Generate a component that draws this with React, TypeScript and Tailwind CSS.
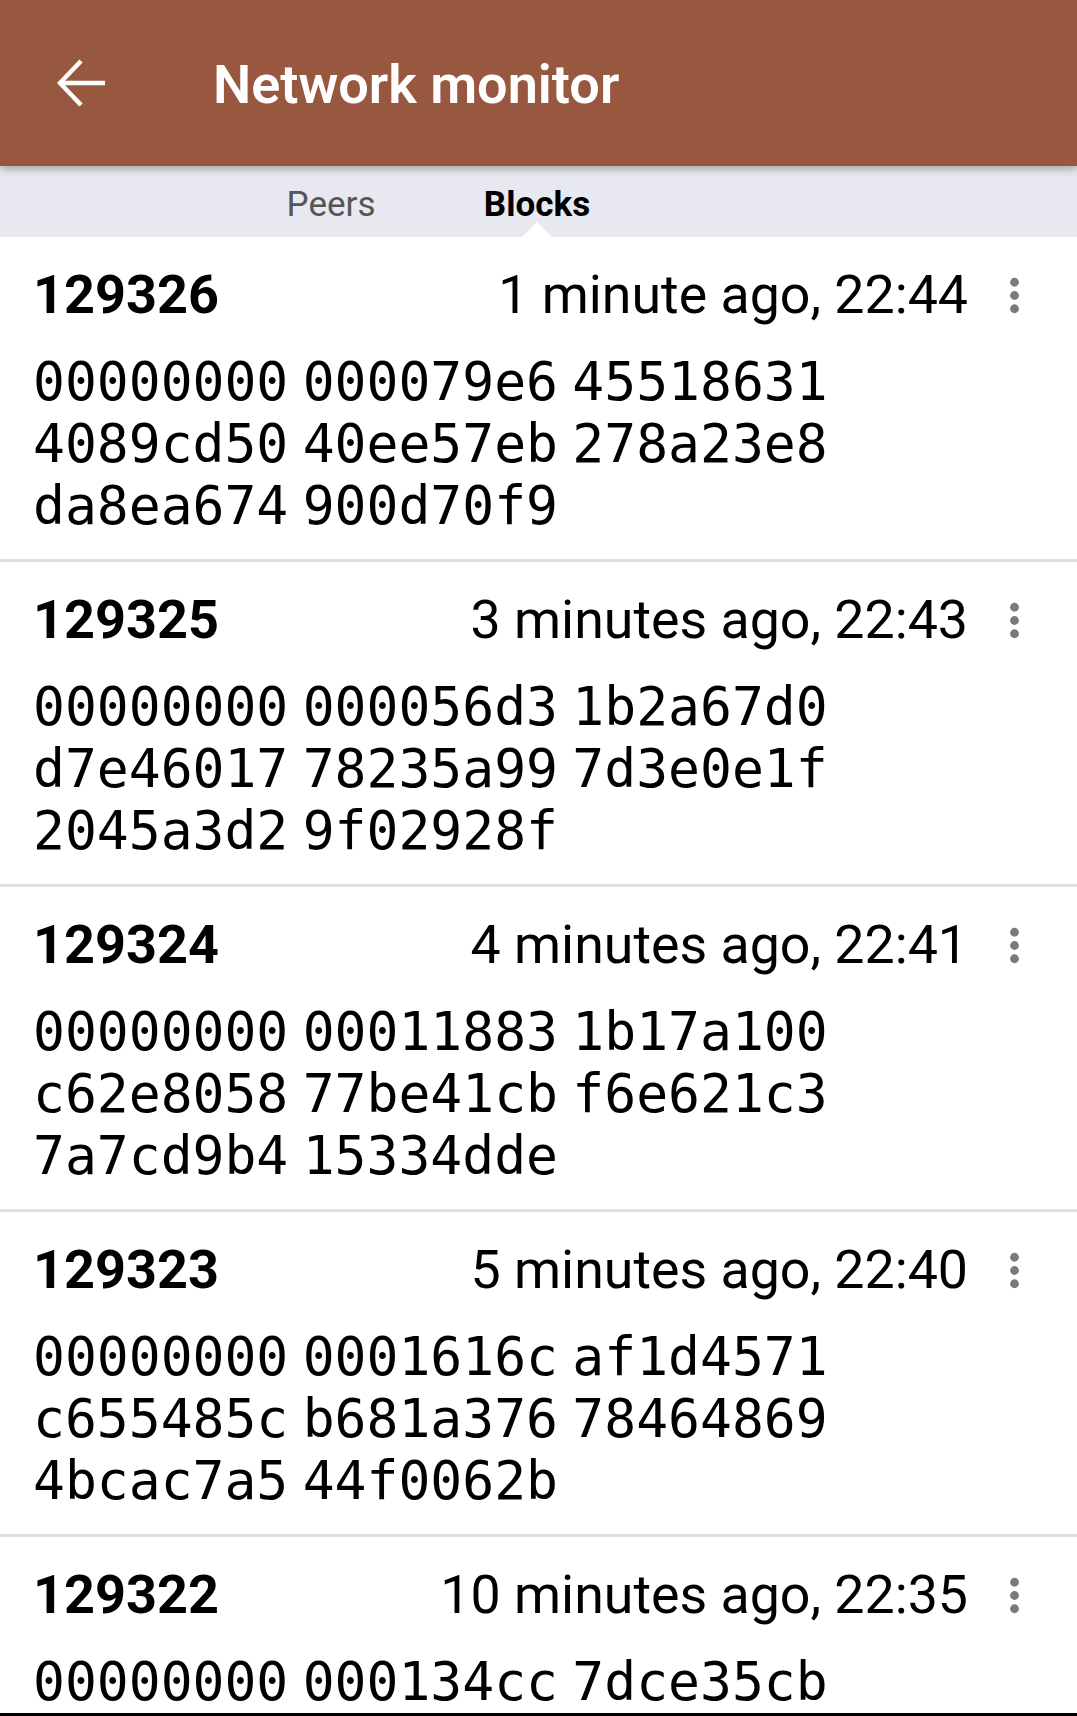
import React from "react";

type Block = {
  height: string;
  time: string;
  hash: string[];
};

const blocks: Block[] = [
  {
    height: "129326",
    time: "1 minute ago, 22:44",
    hash: ["00000000 000079e6 45518631", "4089cd50 40ee57eb 278a23e8", "da8ea674 900d70f9"],
  },
  {
    height: "129325",
    time: "3 minutes ago, 22:43",
    hash: ["00000000 000056d3 1b2a67d0", "d7e46017 78235a99 7d3e0e1f", "2045a3d2 9f02928f"],
  },
  {
    height: "129324",
    time: "4 minutes ago, 22:41",
    hash: ["00000000 00011883 1b17a100", "c62e8058 77be41cb f6e621c3", "7a7cd9b4 15334dde"],
  },
  {
    height: "129323",
    time: "5 minutes ago, 22:40",
    hash: ["00000000 0001616c af1d4571", "c655485c b681a376 78464869", "4bcac7a5 44f0062b"],
  },
  {
    height: "129322",
    time: "10 minutes ago, 22:35",
    hash: ["00000000 000134cc 7dce35cb"],
  },
];

const MoreIcon = () => (
  <svg viewBox="0 0 24 24" className="w-[53px] h-[53px]" fill="#7a7a7a">
    <circle cx="12" cy="6" r="2" />
    <circle cx="12" cy="12" r="2" />
    <circle cx="12" cy="18" r="2" />
  </svg>
);

const BlockRow = ({ block, last }: { block: Block; last: boolean }) => (
  <div>
    <div className="pl-[33px] pr-[36px] pt-[27px] pb-[22px]">
      <div className="flex items-center h-[62px]">
        <span className="text-[54px] leading-[62px] font-bold text-black">{block.height}</span>
        <div className="flex-1" />
        <span className="text-[53.7px] leading-[62px] text-black">{block.time}</span>
        <div className="ml-[20px]">
          <MoreIcon />
        </div>
      </div>
      <div className="mt-[25px] font-['DejaVu_Sans_Mono',monospace] text-[53px] leading-[62px] [word-spacing:-17.5px] text-black whitespace-pre">
        {block.hash.map((line) => (
          <div key={line}>{line}</div>
        ))}
      </div>
    </div>
    {!last && <div className="h-[3px] bg-[#e0e0e0]" />}
  </div>
);

export default function App() {
  return (
    <div className="w-[1077px] h-[1716px] flex flex-col overflow-hidden bg-white font-['Roboto','Liberation_Sans',sans-serif]">
      {/* Toolbar */}
      <header className="relative z-10 h-[166px] shrink-0 bg-[#98573f] flex items-center shadow-[0_3px_8px_rgba(0,0,0,0.3)]">
        <svg
          viewBox="0 0 48 48"
          className="ml-[57px] w-[48px] h-[48px]"
          fill="none"
          stroke="white"
          strokeWidth="4.5"
        >
          <path d="M48 24H3" />
          <path d="M24 2L3 24L24 46" />
        </svg>
        <h1 className="ml-[108px] pt-[3px] text-[54px] font-semibold text-white">Network monitor</h1>
      </header>

      {/* Tabs */}
      <nav className="h-[71px] shrink-0 bg-[#e8e8f0] flex pl-[228px]">
        <div className="w-[206px] flex items-center justify-center pt-[8px] text-[35px] text-[#555555]">
          Peers
        </div>
        <div className="relative w-[206px] flex items-center justify-center pt-[8px] text-[35px] font-bold text-black">
          Blocks
          <div className="absolute bottom-0 left-1/2 -translate-x-1/2 w-0 h-0 border-l-[15px] border-r-[15px] border-b-[15px] border-l-transparent border-r-transparent border-b-white" />
        </div>
      </nav>

      {/* Block list */}
      <main className="flex-1 overflow-hidden">
        {blocks.map((b, i) => (
          <BlockRow key={b.height} block={b} last={i === blocks.length - 1} />
        ))}
      </main>
      <div className="h-[3px] shrink-0 bg-black" />
    </div>
  );
}
